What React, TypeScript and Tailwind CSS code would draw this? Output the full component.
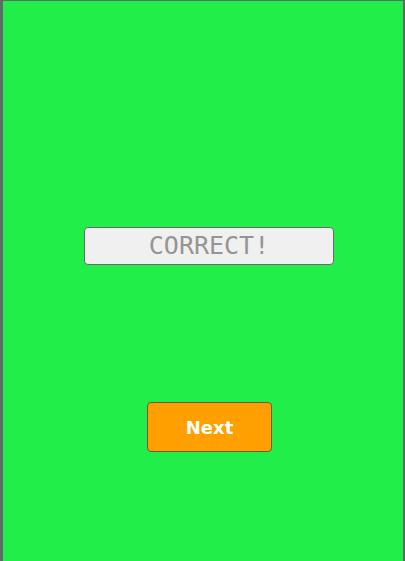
export default function App() {
    return (
        <div className="h-[561px] overflow-hidden border-l-[3px] border-r-2 border-t border-[#5a6b68] bg-[#22ee4a]">
            <div className="flex flex-col items-center pt-[226px]">
                {/* Answer box */}
                <div
                    className="ml-[12px] flex h-[38px] w-[250px] items-center justify-center rounded-[4px] border border-[#6b6b6b] bg-[#f0f0f0] text-[25px] text-[#959595]"
                    style={{ fontFamily: '"DejaVu Sans Mono", monospace' }}
                >
                    CORRECT!
                </div>

                <button
                    className="ml-[13px] mt-[137px] h-[50px] w-[125px] rounded-[4px] border border-[#6e5a36] bg-[#ff9f00] text-[18px] font-bold text-white"
                    style={{ fontFamily: '"DejaVu Sans", sans-serif' }}
                >
                    Next
                </button>
            </div>
        </div>
    );
}
